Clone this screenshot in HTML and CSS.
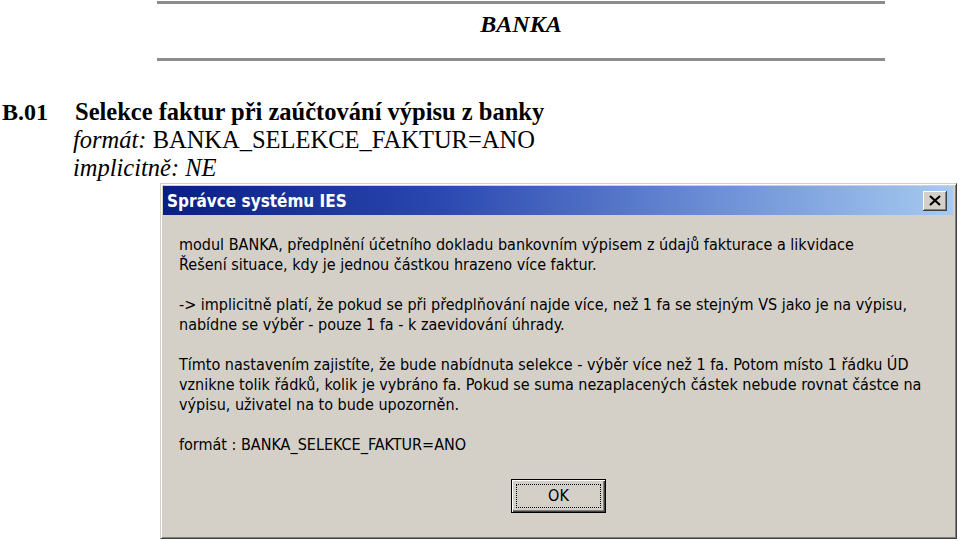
FILE: index.html
```html
<!DOCTYPE html>
<html lang="cs">
<head>
    <meta charset="UTF-8">
    <meta name="viewport" content="width=device-width, initial-scale=1.0">
    <title>BANKA</title>
    <link rel="stylesheet" href="styles.css">
</head>
<body>
    <div class="page">
        <div class="doc-head">
            <h1 class="doc-title">BANKA</h1>
        </div>

        <div class="section">
            <div class="section-code">B.01</div>
            <div class="section-body">
                <h2 class="section-title">Selekce faktur při zaúčtování výpisu z banky</h2>
                <p class="section-line"><em>formát:</em> BANKA_SELEKCE_FAKTUR=ANO</p>
                <p class="section-line"><em>implicitně: NE</em></p>
            </div>
        </div>

        <div class="dialog">
            <div class="dialog-titlebar">
                <span class="dialog-caption">Správce systému IES</span>
                <button class="dialog-close">
                    <svg width="12" height="11" viewBox="0 0 12 11">
                        <path d="M1 1 L11 10 M11 1 L1 10" stroke="#000" stroke-width="2.2" fill="none"/>
                    </svg>
                </button>
            </div>
            <div class="dialog-body">
                <p>modul BANKA, předplnění účetního dokladu bankovním výpisem z údajů fakturace a likvidace<br>
                Řešení situace, kdy je jednou částkou hrazeno více faktur.</p>
                <p>-&gt; implicitně platí, že pokud se při předplňování najde více, než 1 fa se stejným VS jako je na výpisu,<br>
                nabídne se výběr - pouze 1 fa - k zaevidování úhrady.</p>
                <p>Tímto nastavením zajistíte, že bude nabídnuta selekce - výběr více než 1 fa. Potom místo 1 řádku ÚD<br>
                vznikne tolik řádků, kolik je vybráno fa. Pokud se suma nezaplacených částek nebude rovnat částce na<br>
                výpisu, uživatel na to bude upozorněn.</p>
                <p>formát : BANKA_SELEKCE_FAKTUR=ANO</p>
            </div>
            <div class="dialog-buttons">
                <button class="ok-button"><span class="ok-focus">OK</span></button>
            </div>
        </div>
    </div>
</body>
</html>
```

FILE: styles.css
```css
* {
    box-sizing: border-box;
    margin: 0;
    padding: 0;
}
body {
    background-color: #ffffff;
    font-family: "Liberation Serif", "Times New Roman", serif;
    color: #000000;
}
.page {
    width: 960px;
    height: 541px;
    overflow: hidden;
}
.doc-head {
    width: 728px;
    height: 60px;
    margin-left: 157px;
    margin-top: 1px;
    border-top: 3px solid #8c8c8c;
    border-bottom: 3px solid #8c8c8c;
    text-align: center;
}
.doc-title {
    font-size: 24px;
    font-weight: bold;
    font-style: italic;
    line-height: 28px;
    padding-top: 6px;
}
.section {
    display: flex;
    margin-top: 37px;
    padding-left: 2px;
}
.section-code {
    width: 73px;
    font-size: 24px;
    font-weight: bold;
    line-height: 28px;
}
.section-title {
    font-size: 24.5px;
    font-weight: bold;
    line-height: 28px;
}
.section-line {
    font-size: 24.5px;
    line-height: 28px;
    margin-left: -2px;
}
.dialog {
    width: 797px;
    height: 356px;
    margin-left: 160px;
    margin-top: 1px;
    background-color: #d4d0c8;
    border-top: 1px solid #d4d0c8;
    border-left: 1px solid #d4d0c8;
    border-right: 1px solid #404040;
    border-bottom: 1px solid #404040;
    box-shadow: inset 1px 1px 0 #ffffff, inset -1px -1px 0 #808080;
    padding: 2px 3px 3px 2px;
    display: flex;
    flex-direction: column;
    font-family: "DejaVu Sans Condensed", "DejaVu Sans", sans-serif;
    font-stretch: condensed;
}
.dialog-titlebar {
    height: 29px;
    display: flex;
    align-items: center;
    justify-content: space-between;
    padding: 0 6px 0 4px;
    background: linear-gradient(to right, #0a1e84 0%, #2a48b0 35%, #6c8fd6 70%, #a6caf0 100%);
}
.dialog-caption {
    color: #ffffff;
    font-weight: bold;
    font-size: 17px;
}
.dialog-close {
    width: 24px;
    height: 20px;
    display: flex;
    align-items: center;
    justify-content: center;
    background-color: #d4d0c8;
    border: none;
    box-shadow: inset -1px -1px 0 #404040, inset 1px 1px 0 #ffffff, inset -2px -2px 0 #808080;
}
.dialog-body {
    padding: 20px 0 0 16px;
    font-size: 16px;
    line-height: 20px;
    white-space: nowrap;
}
.dialog-body p {
    margin-bottom: 20px;
}
.dialog-buttons {
    padding-left: 348px;
    margin-top: 4px;
}
.ok-button {
    width: 95px;
    height: 34px;
    background-color: #d4d0c8;
    border: 1px solid #000000;
    box-shadow: inset 1px 1px 0 #ffffff, inset -1px -1px 0 #404040, inset -2px -2px 0 #808080;
    padding: 4px;
    font-family: inherit;
    font-stretch: condensed;
    font-size: 16px;
}
.ok-focus {
    display: block;
    height: 100%;
    border: 1px dotted #000000;
    line-height: 22px;
    color: #000000;
}
```
